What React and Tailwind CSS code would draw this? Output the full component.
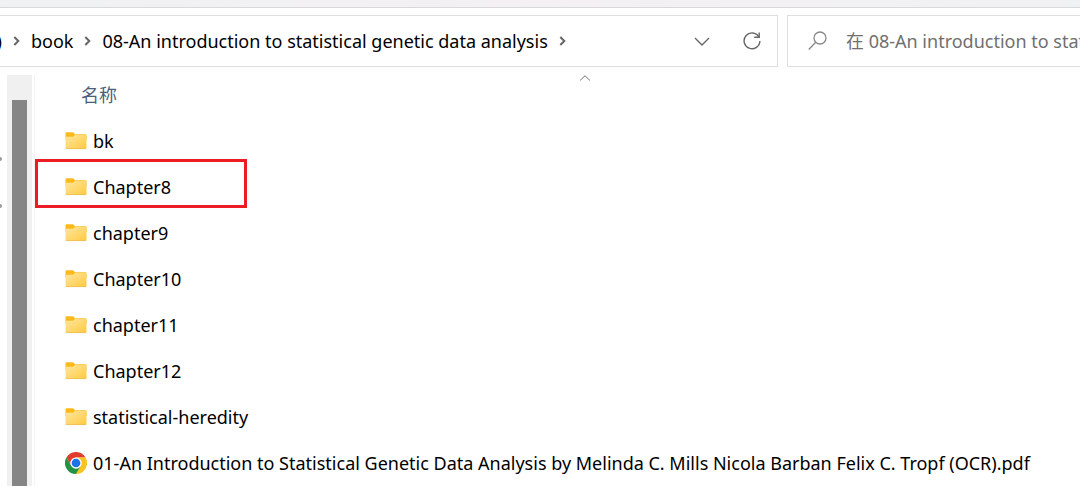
const entries = [
  { name: "bk", type: "folder" },
  { name: "Chapter8", type: "folder", marked: true },
  { name: "chapter9", type: "folder" },
  { name: "Chapter10", type: "folder" },
  { name: "chapter11", type: "folder" },
  { name: "Chapter12", type: "folder" },
  { name: "statistical-heredity", type: "folder" },
  {
    name: "01-An Introduction to Statistical Genetic Data Analysis by Melinda C. Mills Nicola Barban Felix C. Tropf (OCR).pdf",
    type: "pdf",
  },
];

function FolderIcon() {
  return (
    <svg className="h-[18px] w-[22px] shrink-0" viewBox="0 0 22 18" aria-hidden="true">
      <defs>
        <linearGradient id="folder-front" x1="0" y1="0" x2="1" y2="1">
          <stop offset="0" stopColor="#ffe6a0" />
          <stop offset="1" stopColor="#ffca40" />
        </linearGradient>
      </defs>
      <path d="M0.5 1.2Q0.5 0.2 1.5 0.2H7.4Q8 0.2 8.4 0.6L10 2.2H20.5Q21.5 2.2 21.5 3.2V8H0.5Z" fill="#fbb91c" />
      <path d="M0.5 4.8H7.4Q8 4.8 8.4 4.4L10 2.8H20.5Q21.5 2.8 21.5 3.8V15.8Q21.5 16.8 20.5 16.8H1.5Q0.5 16.8 0.5 15.8Z" fill="url(#folder-front)" />
      <path d="M1 16.6H21" stroke="#e8b23c" strokeWidth="0.7" />
    </svg>
  );
}

function ChromeIcon() {
  return (
    <svg className="size-[22px] shrink-0" viewBox="0 0 48 48" aria-hidden="true">
      <circle cx="24" cy="24" r="24" fill="#fff" />
      <path d="M3.2 12A24 24 0 0 1 44.8 12H24A12 12 0 0 0 13.6 30Z" fill="#e33b2e" />
      <path d="M44.8 12A24 24 0 0 1 24 48L34.4 30A12 12 0 0 0 24 12Z" fill="#fcc31e" />
      <path d="M24 48A24 24 0 0 1 3.2 12L13.6 30A12 12 0 0 0 34.4 30Z" fill="#229342" />
      <circle cx="24" cy="24" r="12" fill="#fff" />
      <circle cx="24" cy="24" r="9.5" fill="#1a73e8" />
    </svg>
  );
}

function Separator() {
  return (
    <svg className="h-[10px] w-[7px] shrink-0" viewBox="0 0 7 10" fill="none" stroke="#666" strokeWidth="2" aria-hidden="true">
      <path d="M1.3 1L5.3 5L1.3 9" />
    </svg>
  );
}

function AddressBar() {
  return (
    <nav aria-label="Address" className="-ml-px flex h-[52px] min-w-0 flex-1 items-center border border-[#dedede] bg-white">
      <div className="flex min-w-0 flex-1 items-center gap-[11px] whitespace-nowrap">
        <span className="flex w-[2px] justify-end">)</span>
        <Separator />
        <a href="#book">book</a>
        <Separator />
        <a href="#current">08-An introduction to statistical genetic data analysis</a>
        <Separator />
      </div>
      <button type="button" aria-label="Previous locations" className="flex h-full w-[50px] items-center justify-center">
        <svg className="h-[9px] w-4" viewBox="0 0 16 9" fill="none" stroke="#666" strokeWidth="1.4">
          <path d="M1 1L8 8L15 1" />
        </svg>
      </button>
      <button type="button" aria-label="Refresh" className="flex h-full w-[50px] items-center justify-center">
        <svg className="size-[18px]" viewBox="0 0 18 18" fill="none" stroke="#666" strokeWidth="1.4">
          <path d="M15.8 4.8A7.9 7.9 0 1 0 16.9 9" />
          <path d="M16.2 0.5V5.2H11.2" />
        </svg>
      </button>
    </nav>
  );
}

function SearchBox() {
  return (
    <label className="flex h-[52px] w-[293px] shrink-0 items-center border border-r-0 border-[#dedede] bg-white pl-5">
      <svg className="size-5 shrink-0" viewBox="0 0 20 20" fill="none" stroke="#888" strokeWidth="1.3" aria-hidden="true">
        <circle cx="12" cy="7" r="6" />
        <path d="M7.7 11.3L0.8 18.5" />
      </svg>
      <input
        type="text"
        aria-label="Search"
        placeholder="在 08-An introduction to statistical genetic data analysis 中搜索"
        className="ml-[18px] min-w-0 flex-1 bg-transparent outline-none placeholder:text-[#707070]"
      />
    </label>
  );
}

function FileTable() {
  return (
    <table className="w-[1100px] table-fixed text-left">
      <thead>
        <tr>
          <th className="p-0 font-normal text-[#4c607a]">
            <button type="button" className="relative flex h-[43px] w-full items-center pb-1 pl-[46px]">
              名称
              <svg className="absolute top-0 left-1/2 h-[6px] w-[11px] -translate-x-1/2" viewBox="0 0 11 6" fill="none" stroke="#777" aria-hidden="true">
                <path d="M0.5 5.5L5.5 0.7L10.5 5.5" />
              </svg>
            </button>
          </th>
        </tr>
      </thead>
      <tbody>
        {entries.map((entry) => (
          <tr key={entry.name}>
            <td className="relative h-[46px] p-0">
              <div className="flex items-center gap-[6px] pl-[30px] whitespace-nowrap">
                {entry.type === "folder" ? <FolderIcon /> : <ChromeIcon />}
                {entry.name}
              </div>
              {entry.marked && (
                <div className="absolute -top-[5px] left-0 h-[49px] w-[212px] border-3 border-[#ec1c24]" />
              )}
            </td>
          </tr>
        ))}
      </tbody>
    </table>
  );
}

export default function App() {
  return (
    <div className="flex h-screen flex-col overflow-hidden bg-white font-['Noto_Sans','Noto_Sans_CJK_SC',sans-serif] text-[18px] leading-6 text-black">
      <div className="h-2 shrink-0 border-b border-[#d9d9d9] bg-linear-to-r from-[#eff1f3] via-[#f4f0f3] to-[#f0f1f3]" />
      <header className="flex shrink-0 gap-[9px] pt-[7px]">
        <AddressBar />
        <SearchBox />
      </header>
      <main className="flex min-h-0 flex-1 pt-2">
        {/* edge of the navigation pane */}
        <div className="flex w-[7px] shrink-0 flex-col gap-[43px] pt-[82px]">
          <span className="-ml-[2px] size-1 rounded-full bg-[#999]" />
          <span className="-ml-[2px] size-1 rounded-full bg-[#999]" />
        </div>
        <div className="flex w-[25px] shrink-0 justify-center bg-[#f0f0f0] pt-[25px]">
          <div className="w-[15px] bg-[#858585]" />
        </div>
        <div className="ml-[2px] min-w-0 flex-1 overflow-hidden border-l border-[#f3f3f3]">
          <FileTable />
        </div>
      </main>
    </div>
  );
}
